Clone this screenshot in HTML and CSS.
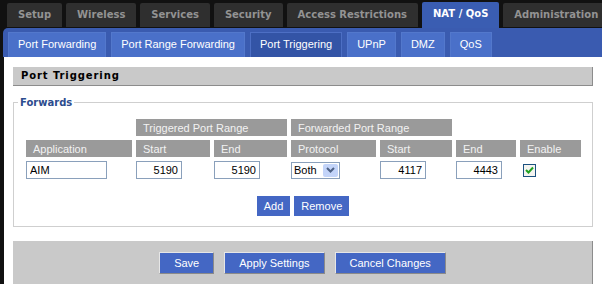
FILE: index.html
```html
<!DOCTYPE html>
<html lang="en">
<head>
    <meta charset="UTF-8">
    <title>NAT / QoS - Port Triggering</title>
    <link rel="stylesheet" href="styles.css">
</head>
<body>
<div class="page">

    <ul class="mainnav">
        <li><a href="#">Setup</a></li>
        <li><a href="#">Wireless</a></li>
        <li><a href="#">Services</a></li>
        <li><a href="#">Security</a></li>
        <li><a href="#">Access Restrictions</a></li>
        <li class="current"><a href="#">NAT / QoS</a></li>
        <li><a href="#">Administration</a></li>
    </ul>

    <ul class="subnav">
        <li><a href="#">Port Forwarding</a></li>
        <li><a href="#">Port Range Forwarding</a></li>
        <li class="current"><a href="#">Port Triggering</a></li>
        <li><a href="#">UPnP</a></li>
        <li><a href="#">DMZ</a></li>
        <li><a href="#">QoS</a></li>
    </ul>

    <div class="content">
        <h2 class="heading">Port Triggering</h2>

        <fieldset class="forwards">
            <legend>Forwards</legend>
            <table class="trigger-table">
                <colgroup>
                    <col class="c-app">
                    <col class="c-tstart">
                    <col class="c-tend">
                    <col class="c-proto">
                    <col class="c-fstart">
                    <col class="c-fend">
                    <col class="c-enable">
                </colgroup>
                <tr>
                    <td></td>
                    <th colspan="2">Triggered Port Range</th>
                    <th colspan="2">Forwarded Port Range</th>
                    <td></td>
                    <td></td>
                </tr>
                <tr>
                    <th>Application</th>
                    <th>Start</th>
                    <th>End</th>
                    <th>Protocol</th>
                    <th>Start</th>
                    <th>End</th>
                    <th>Enable</th>
                </tr>
                <tr class="entry">
                    <td><input class="text app" type="text" value="AIM"></td>
                    <td><input class="text num" type="text" value="5190"></td>
                    <td><input class="text num" type="text" value="5190"></td>
                    <td>
                        <span class="select">
                            <select>
                                <option>Both</option>
                                <option>TCP</option>
                                <option>UDP</option>
                            </select>
                            <span class="select-arrow">
                                <svg width="9" height="6" viewBox="0 0 9 6"><path d="M1 1 L4.5 4.5 L8 1" fill="none" stroke="#4d6185" stroke-width="2"/></svg>
                            </span>
                        </span>
                    </td>
                    <td><input class="text num" type="text" value="4117"></td>
                    <td><input class="text num" type="text" value="4443"></td>
                    <td>
                        <span class="check">
                            <svg width="11" height="11" viewBox="0 0 11 11"><path d="M2 5 L4.5 7.5 L9 2.5" fill="none" stroke="#21a121" stroke-width="2"/></svg>
                        </span>
                    </td>
                </tr>
            </table>

            <div class="table-actions">
                <button class="btn small">Add</button>
                <button class="btn small">Remove</button>
            </div>
        </fieldset>

        <div class="footer">
            <button class="btn">Save</button>
            <button class="btn">Apply Settings</button>
            <button class="btn">Cancel Changes</button>
        </div>
    </div>

</div>
</body>
</html>
```

FILE: styles.css
```css
/* Global */
body {
    margin: 0;
    background-color: #111;
    font-family: 'Liberation Sans', Arial, sans-serif;
    font-size: 11px;
    overflow: hidden;
}

.page {
    padding-left: 3px;
}

/* Main tabs */
.mainnav {
    list-style: none;
    display: flex;
    align-items: flex-end;
    gap: 4px;
    height: 28px;
    margin: 0;
    padding: 0 0 0 4px;
    white-space: nowrap;
}

.mainnav li {
    height: 24px;
    margin-bottom: 1px;
    background-color: #2f2f2f;
    border-radius: 2px 2px 0 0;
}

.mainnav li a {
    display: block;
    padding: 0 11px;
    line-height: 24px;
    font-family: 'DejaVu Sans', Verdana, sans-serif;
    font-size: 10px;
    font-weight: bold;
    color: #939393;
    text-decoration: none;
}

.mainnav li.current {
    height: 26px;
    margin-bottom: 0;
    background-color: #3a5db2;
}

.mainnav li.current a {
    color: #fff;
    line-height: 24px;
}

/* Sub tabs */
.subnav {
    list-style: none;
    display: flex;
    align-items: flex-end;
    gap: 5px;
    height: 29px;
    margin: 0;
    padding: 0 0 0 5px;
    background-color: #3a5bb0;
    border-radius: 5px 0 0 0;
}

.subnav li {
    height: 24px;
    background-color: #4a70c9;
    border: 1px solid #5378cc;
    border-bottom: none;
}

.subnav li a {
    display: block;
    padding: 0 9px;
    line-height: 23px;
    font-size: 11px;
    color: #fff;
    text-decoration: none;
}

.subnav li.current {
    background-color: #3354a6;
    border-color: #4d6fc4;
}

/* Content */
.content {
    margin-left: 1px;
    padding: 10px 9px 0 9px;
    background-color: #fff;
    min-height: 240px;
}

.heading {
    margin: 0;
    height: 18px;
    padding-left: 8px;
    line-height: 18px;
    font-family: 'DejaVu Sans', Verdana, sans-serif;
    font-size: 10px;
    font-weight: bold;
    letter-spacing: 0.9px;
    color: #000;
    background-color: #c9c9c9;
    border-right: 1px solid #8c8c8c;
    border-bottom: 1px solid #8c8c8c;
}

.forwards {
    margin: 11px 0 0 0;
    padding: 0 4px 10px 4px;
    border: 1px solid #cfcfcf;
}

.forwards legend {
    padding: 0 2px;
    font-family: 'DejaVu Sans', Verdana, sans-serif;
    font-size: 10px;
    font-weight: bold;
    color: #2c4c8e;
}

/* Table */
.trigger-table {
    margin: 7px 0 0 4px;
    border-spacing: 4px;
    table-layout: fixed;
}

.c-app { width: 106px; }
.c-tstart { width: 74px; }
.c-tend { width: 73px; }
.c-proto { width: 85px; }
.c-fstart { width: 72px; }
.c-fend { width: 60px; }
.c-enable { width: 61px; }

.trigger-table th {
    height: 17px;
    padding: 0 7px;
    font-weight: normal;
    text-align: left;
    color: #f2f2f2;
    background-color: #9a9a9a;
}

.trigger-table td {
    padding: 0;
    vertical-align: middle;
}

.entry td {
    height: 18px;
}

.text {
    box-sizing: border-box;
    height: 18px;
    padding: 0 3px;
    border: 1px solid #8aa0bb;
    font-family: 'Liberation Sans', Arial, sans-serif;
    font-size: 11px;
    color: #000;
}

.text.app {
    width: 81px;
}

.text.num {
    width: 46px;
    text-align: right;
}

/* XP style select */
.select {
    position: relative;
    display: inline-block;
    vertical-align: middle;
}

.select select {
    appearance: none;
    -webkit-appearance: none;
    box-sizing: border-box;
    width: 49px;
    height: 17px;
    padding: 0 0 0 2px;
    border: 1px solid #8aa0bb;
    border-radius: 0;
    background-color: #fff;
    font-family: 'Liberation Sans', Arial, sans-serif;
    font-size: 11px;
    color: #000;
}

.select-arrow {
    position: absolute;
    top: 2px;
    right: 2px;
    width: 15px;
    height: 13px;
    display: flex;
    align-items: center;
    justify-content: center;
    background-color: #c3d4f9;
    border-radius: 2px;
    pointer-events: none;
}

.check {
    display: inline-flex;
    align-items: center;
    justify-content: center;
    box-sizing: border-box;
    width: 13px;
    height: 13px;
    margin-left: 3px;
    border: 1px solid #1c5180;
    background-color: #f4f4f0;
    vertical-align: middle;
}

/* Buttons */
.table-actions {
    display: flex;
    justify-content: center;
    gap: 4px;
    margin-top: 13px;
}

.btn {
    height: 22px;
    padding: 0 14px;
    font-family: 'Liberation Sans', Arial, sans-serif;
    font-size: 11px;
    color: #fff;
    background-color: #4467c4;
    border: 1px solid;
    border-color: #e6e6e6 #8a8a8a #8a8a8a #e6e6e6;
    cursor: pointer;
}

.btn.small {
    height: 20px;
    padding: 0 6px;
    border-color: #4467c4;
}

.btn:hover {
    opacity: 0.9;
}

.footer {
    display: flex;
    justify-content: center;
    gap: 10px;
    margin-top: 14px;
    padding: 11px 0 12px 0;
    background-color: #c9c9c9;
    border-right: 1px solid #8c8c8c;
    border-bottom: 1px solid #8c8c8c;
}
```
